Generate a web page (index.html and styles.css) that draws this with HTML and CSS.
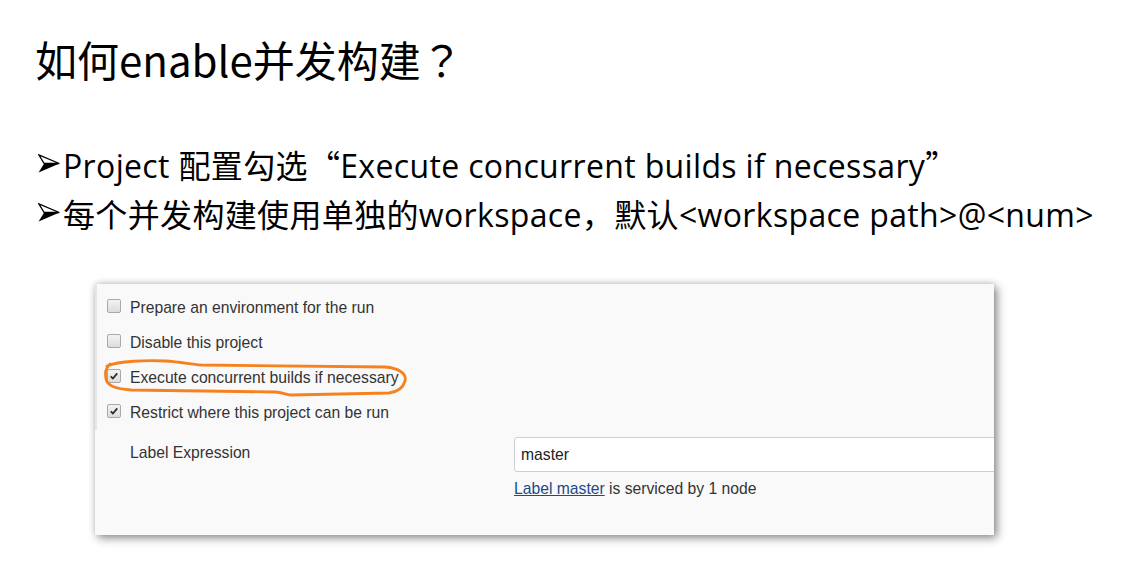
FILE: index.html
```html
<!DOCTYPE html>
<html lang="zh-CN">
<head>
<meta charset="utf-8">
<title>如何enable并发构建</title>
<link rel="stylesheet" href="styles.css">
</head>
<body>
<main class="slide">
  <h1 class="title">如何enable并发构建<span class="qmark" lang="ja">？</span></h1>
  <ul class="points">
    <li><svg class="arrow" viewBox="0 0 22 19" width="22" height="19"><polygon class="a-top" points="0.8,0.8 21.3,9.5 6.2,9.5"/><polygon class="a-bot" points="6.2,9.5 21.5,9.5 0.6,18.6"/></svg><span>Project 配置勾选<span class="cjk">“</span>Execute concurrent builds if necessary<span class="cjk">”</span></span></li>
    <li><svg class="arrow" viewBox="0 0 22 19" width="22" height="19"><polygon class="a-top" points="0.8,0.8 21.3,9.5 6.2,9.5"/><polygon class="a-bot" points="6.2,9.5 21.5,9.5 0.6,18.6"/></svg><span>每个并发构建使用单独的workspace<span class="cjk">，</span>默认&lt;workspace path&gt;@&lt;num&gt;</span></li>
  </ul>
  <section class="panel">
    <div class="options">
      <div class="opt"><span class="cb"></span><span>Prepare an environment for the run</span></div>
      <div class="opt"><span class="cb"></span><span>Disable this project</span></div>
      <div class="opt"><span class="cb checked"><svg viewBox="0 0 13 13"><path d="M3 6.8 L5.3 9.2 L10 3.6" /></svg></span><span>Execute concurrent builds if necessary</span></div>
      <div class="opt"><span class="cb checked"><svg viewBox="0 0 13 13"><path d="M3 6.8 L5.3 9.2 L10 3.6" /></svg></span><span>Restrict where this project can be run</span></div>
    </div>
    <div class="field">
      <div class="field-label">Label Expression</div>
      <div class="field-main">
        <div class="input">master</div>
        <div class="hint"><a href="#" class="link">Label master</a> is serviced by 1 node</div>
      </div>
    </div>
    <svg class="annot" viewBox="0 0 899 251" width="899" height="251">
      <path d="M12 82 C24 77, 52 76, 70 77 C86 78, 94 80, 106 81 L290 83 C304 84, 312 90, 310 97 C308 104, 302 108, 294 109 L196 111 C190 111, 188 108, 180 108 L36 106 C21 105, 12 101, 11 95 C10 89, 10 85, 15 80"/>
    </svg>
  </section>
</main>
</body>
</html>
```
FILE: styles.css
```css
* { box-sizing: border-box; }
html, body { margin: 0; padding: 0; background: #ffffff; }
body {
  width: 1140px;
  height: 581px;
  overflow: hidden;
  font-family: "Noto Sans CJK SC", sans-serif;
  color: #000;
}
.slide {
  padding: 29px 0 0 35px;
}
.title {
  margin: 0;
  font-size: 42px;
  font-weight: 400;
  line-height: 60px;
  height: 60px;
}
.qmark {
  font-family: "Noto Sans CJK JP", sans-serif;
}
.points {
  list-style: none;
  margin: 51px 0 0 0;
  padding: 0;
  font-family: "Open Sans", "Noto Sans CJK SC", sans-serif;
  font-size: 32px;
  line-height: 49px;
  letter-spacing: 0.35px;
}
.points li {
  display: flex;
  align-items: center;
  height: 49px;
  white-space: nowrap;
}
.cjk {
  font-family: "Noto Sans CJK SC", sans-serif;
}
.arrow {
  flex: none;
  margin: -3px 3px 0 3px;
}
.a-top { fill: #fff; stroke: #000; stroke-width: 1.3; stroke-linejoin: miter; }
.a-bot { fill: #000; }
.panel {
  position: relative;
  margin: 46px 0 0 60px;
  width: 899px;
  height: 251px;
  background: #f9f9f9;
  box-shadow: 3px 3px 9px rgba(0,0,0,0.45), 0 -1px 6px rgba(0,0,0,0.12);
  font-family: "Liberation Sans", Arial, sans-serif;
  font-size: 15.7px;
  color: #333;
}
.options {
  padding-top: 6px;
  border-left: 2px solid #e6e6e6;
  height: 146px;
}
.opt {
  height: 35px;
  display: flex;
  align-items: center;
  padding-left: 10px;
}
.cb {
  flex: none;
  width: 14px;
  height: 14px;
  border: 1px solid #a9a9a9;
  border-radius: 2px;
  background: linear-gradient(#f3f3f3, #dcdcdc);
  margin: -3px 9px 0 0;
  display: flex;
}
.cb svg { width: 12px; height: 12px; }
.cb svg path { fill: none; stroke: #2b2b2b; stroke-width: 1.9; }
.field {
  display: flex;
  margin-top: 7px;
}
.field-label {
  width: 384px;
  padding-left: 35px;
  padding-top: 6px;
  line-height: 20px;
}
.field-main {
  flex: 1;
  overflow: hidden;
}
.input {
  height: 35px;
  margin-left: 35px;
  margin-right: -10px;
  background: #fff;
  border: 1px solid #cfcfcf;
  border-radius: 3px;
  padding: 0 6px;
  line-height: 33px;
  color: #222;
}
.hint {
  margin-left: 35px;
  margin-top: 7px;
  line-height: 20px;
}
.link { color: #204a87; text-decoration: underline; }
.annot {
  position: absolute;
  left: 0;
  top: 0;
  overflow: visible;
  pointer-events: none;
}
.annot path {
  fill: none;
  stroke: #f5821f;
  stroke-width: 2.8;
  stroke-linecap: round;
  stroke-linejoin: round;
}
```
